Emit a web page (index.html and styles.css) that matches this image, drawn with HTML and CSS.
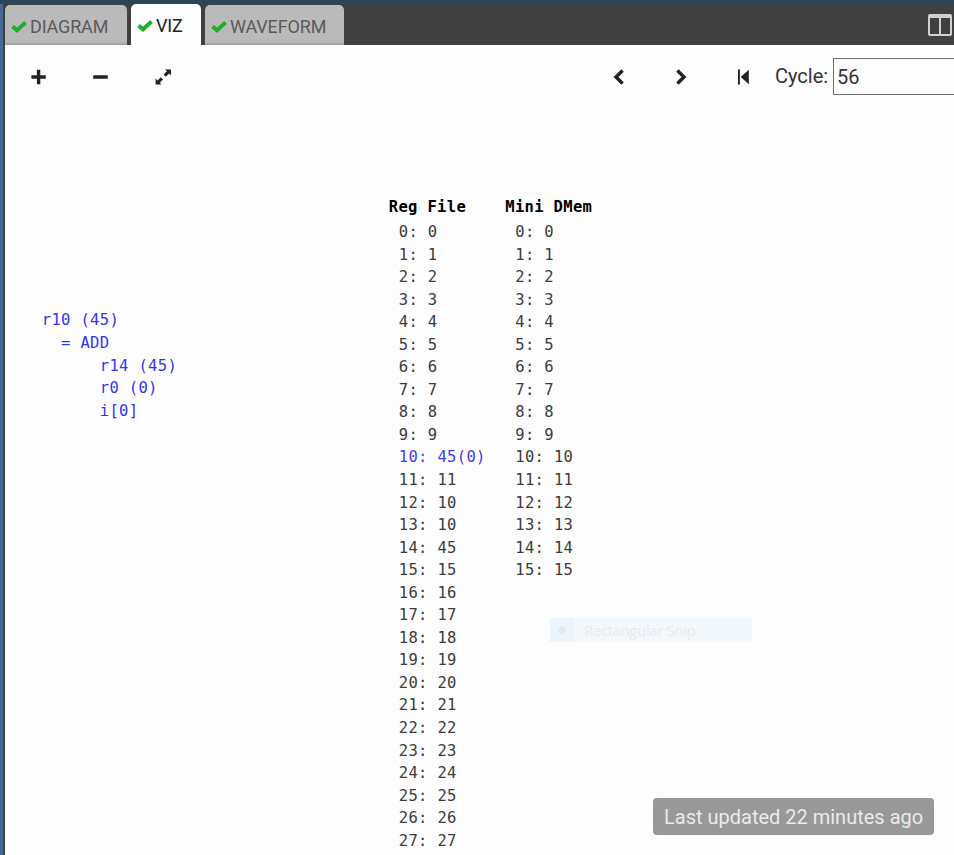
FILE: index.html
```html
<!DOCTYPE html>
<html lang="en">
<head>
<meta charset="utf-8">
<title>VIZ</title>
<link rel="stylesheet" href="styles.css">
</head>
<body>
<div class="app">
  <header class="tabbar">
    <nav class="tabs">
      <div class="tab diagram"><svg class="check" viewBox="0 0 16 12"><path d="M1.500 5.500 6 9.300 14.600 1.600"/></svg><span>DIAGRAM</span></div>
      <div class="tab viz active"><svg class="check" viewBox="0 0 16 12"><path d="M1.500 5.500 6 9.300 14.600 1.600"/></svg><span>VIZ</span></div>
      <div class="tab waveform"><svg class="check" viewBox="0 0 16 12"><path d="M1.500 5.500 6 9.300 14.600 1.600"/></svg><span>WAVEFORM</span></div>
    </nav>
    <svg class="split" viewBox="0 0 24 22"><path d="M2 0h20a2 2 0 0 1 2 2v18a2 2 0 0 1-2 2H2a2 2 0 0 1-2-2V2a2 2 0 0 1 2-2zM2 4v16h9V4zM13 4v16h9V4z" fill-rule="evenodd"/></svg>
  </header>
  <main class="panel">
    <div class="toolbar">
      <svg class="icon plus" viewBox="0 0 16 16"><path d="M6.900.8h3.400v5.500h5.500v3.400h-5.500v5.500H6.900V9.700H1.400V6.300h5.500z"/></svg>
      <svg class="icon minus" viewBox="0 0 16 16"><rect x="1.200" y="6.300" width="14.600" height="3.500" rx=".6"/></svg>
      <svg class="icon expand" viewBox="0 0 16 16"><path d="M10 .4h6v6l-1.900-1.900-3.300 3.300-2.200-2.200 3.300-3.300zM.6 9.600l1.900 1.900 3.300-3.300 2.200 2.200-3.300 3.300 1.900 1.900H.6z"/></svg>
      <svg class="icon prev" viewBox="0 0 16 16"><path class="chevron" d="M11.600 1.500 5 8l6.600 6.500"/></svg>
      <svg class="icon next" viewBox="0 0 16 16"><path class="chevron" d="M4.400 1.500 11 8l-6.600 6.500"/></svg>
      <svg class="icon first" viewBox="0 0 16 16"><path d="M3 .5h1.900v15H3zM13.800.8v14.400L5.700 8z"/></svg>
      <label class="cycle" for="cycle">Cycle:</label>
      <input id="cycle" class="cycle-input" type="text" value="56">
    </div>
    <div class="canvas">
<pre class="instruction"><span>r10 (45)</span>
<span>  = ADD</span>
<span>      r14 (45)</span>
<span>      r0 (0)</span>
<span>      i[0]</span></pre>
      <section class="memory regs">
        <h2>Reg File</h2>
<pre>0: 0
1: 1
2: 2
3: 3
4: 4
5: 5
6: 6
7: 7
8: 8
9: 9
<span class="changed">10: 45(0)</span>
11: 11
12: 10
13: 10
14: 45
15: 15
16: 16
17: 17
18: 18
19: 19
20: 20
21: 21
22: 22
23: 23
24: 24
25: 25
26: 26
27: 27</pre>
      </section>
      <section class="memory dmem">
        <h2>Mini DMem</h2>
<pre>0: 0
1: 1
2: 2
3: 3
4: 4
5: 5
6: 6
7: 7
8: 8
9: 9
10: 10
11: 11
12: 12
13: 13
14: 14
15: 15</pre>
      </section>
    </div>
  </main>
  <div class="snip"><span class="snip-mark"></span><span class="snip-label">Rectangular Snip</span></div>
  <div class="toast">Last updated 22 minutes ago</div>
</div>
</body>
</html>
```
FILE: styles.css
```css
* { box-sizing: border-box; }
body { margin: 0; overflow: hidden; background: #fdfdfd; font-family: Roboto, sans-serif; }
.app {
  position: relative;
  height: 855px;
  overflow: hidden;
  display: flex;
  flex-direction: column;
  border-top: 4px solid #2c435c;
  background: linear-gradient(to right, #466a90 3px, #404040 3px);
}
.tabbar {
  height: 41px;
  flex: none;
  margin-left: 3px;
  padding: 0 2px;
  display: flex;
  justify-content: space-between;
  background: #404040;
}
.tabs { display: flex; gap: 4px; align-items: flex-end; }
.tab {
  height: 40px;
  padding: 3px 0 0 6px;
  display: flex;
  align-items: center;
  border-radius: 5px 5px 0 0;
  background: linear-gradient(to top, #999, #bababa 3px);
  color: #5b5b5b;
  font-size: 18px;
  letter-spacing: -.150px;
  line-height: 20px;
}
.tab span { white-space: nowrap; }
.tab.active { height: 41px; background: #fdfdfd; color: #222; }
.diagram { width: 122px; }
.viz { width: 70px; }
.waveform { width: 139px; }
.check { width: 16px; height: 12px; margin-right: 3px; flex: none; }
.check path { fill: none; stroke: #1cb227; stroke-width: 4; }
.split { width: 24px; height: 22px; margin-top: 10px; fill: #d0d0d0; }
.panel { flex: 1; min-height: 0; margin-left: 5px; background: #fdfdfd; }
.toolbar { height: 65px; display: flex; align-items: center; padding: 0 0 1px 25px; }
.icon { width: 16px; height: 16px; flex: none; fill: #222; }
.minus { margin-left: 46px; }
.expand { margin-left: 47px; }
.prev { margin-left: 440px; }
.next { margin-left: 46px; }
.first { margin-left: 46px; }
.chevron { fill: none; stroke: #222; stroke-width: 3.400; }
.cycle { margin: -2px 0 0 24px; width: 58px; flex: none; font-size: 20px; color: #333; white-space: nowrap; }
.cycle-input {
  width: 166px;
  height: 37px;
  flex: none;
  margin-top: -1px;
  padding: 1px 3px 0;
  border: 1px solid #707070;
  background: #fdfdfd;
  color: #333;
  font: 20px Roboto, sans-serif;
}
.canvas {
  display: grid;
  grid-template-columns: 347px 116.500px 1fr;
  align-items: start;
  padding: 85px 0 0 36.800px;
  font: 15.500px/22.540px "DejaVu Sans Mono", monospace;
  letter-spacing: .330px;
  color: #3c3c3c;
}
pre { margin: 0; font: inherit; }
.instruction { padding-top: 114px; line-height: 22.800px; color: #3434f0; }
.memory h2 { margin: 0 0 2px; font: inherit; line-height: 24px; font-weight: bold; color: #000; }
.memory pre { padding-left: 10px; }
.changed { color: #4040f0; }
.snip {
  position: absolute;
  left: 550px;
  top: 614px;
  width: 202px;
  height: 24px;
  display: flex;
  align-items: center;
  background: #f3f8fd;
  color: #e8eaec;
  font: 15px "Open Sans", sans-serif;
  letter-spacing: -.400px;
}
.snip-mark {
  width: 24px;
  height: 24px;
  background: radial-gradient(circle at 12px 12px, #e7e9eb 3.600px, #ecf5fe 4.400px);
}
.snip-label { margin-left: 10px; }
.toast {
  position: absolute;
  left: 653px;
  top: 794px;
  width: 281px;
  height: 37px;
  padding-left: 11px;
  border-radius: 4px;
  background: #989898;
  color: #eaeaea;
  font-size: 20px;
  line-height: 38px;
  white-space: nowrap;
}
```
